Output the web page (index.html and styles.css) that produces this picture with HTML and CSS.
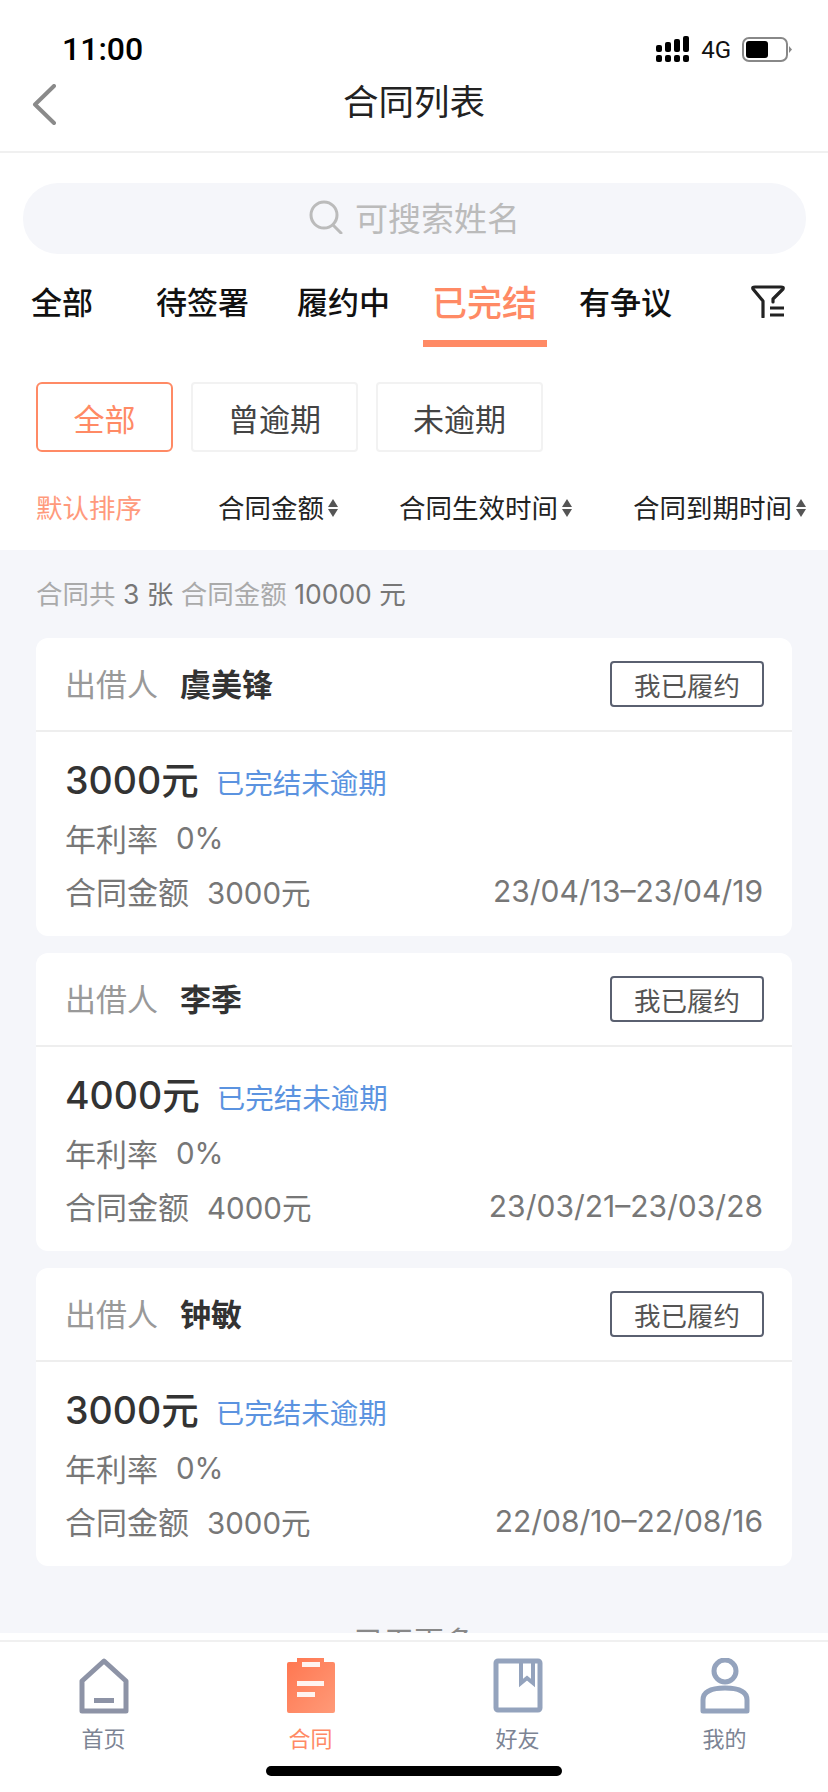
FILE: index.html
```html
<!DOCTYPE html>
<html lang="zh-CN">
<head>
  <meta charset="UTF-8">
  <meta name="viewport" content="width=device-width, initial-scale=1.0">
  <title>合同列表</title>
  <link rel="stylesheet" href="styles.css">
</head>
<body>
  <div class="page">
    <div class="status-bar">
      <span class="time">11:00</span>
      <div class="status-right">
        <svg class="signal" width="34" height="27" viewBox="0 0 34 27">
          <g fill="#000">
            <rect x="0" y="9" width="6" height="7" rx="2"/>
            <rect x="9" y="6" width="6" height="10" rx="2"/>
            <rect x="18" y="3" width="6" height="13" rx="2"/>
            <rect x="27" y="0" width="6" height="16" rx="2"/>
            <rect x="0" y="19" width="6" height="7" rx="2"/>
            <rect x="9" y="19" width="6" height="7" rx="2"/>
            <rect x="18" y="19" width="6" height="7" rx="2"/>
            <rect x="27" y="19" width="6" height="7" rx="2"/>
          </g>
        </svg>
        <span class="net">4G</span>
        <svg width="50" height="26" viewBox="0 0 50 26">
          <rect x="1" y="1" width="44" height="23" rx="6" fill="none" stroke="#888" stroke-width="2"/>
          <rect x="4" y="4" width="22" height="17" rx="3" fill="#000"/>
          <path d="M47 9 L50 12.5 L47 16 Z" fill="#888"/>
        </svg>
      </div>
    </div>

    <div class="nav-bar">
      <svg class="back" width="24" height="41" viewBox="0 0 24 41">
        <path d="M22 2 L3 20.5 L22 39" fill="none" stroke="#8a8a8a" stroke-width="4" stroke-linecap="round" stroke-linejoin="round"/>
      </svg>
      <h1 class="nav-title">合同列表</h1>
    </div>

    <div class="search-box">
      <svg width="34" height="34" viewBox="0 0 34 34">
        <circle cx="15" cy="15" r="13" fill="none" stroke="#bbb" stroke-width="3"/>
        <path d="M24 25 L32 33" stroke="#bbb" stroke-width="3" stroke-linecap="round"/>
      </svg>
      <span>可搜索姓名</span>
    </div>

    <div class="tabs">
      <div class="tab tab-first">全部</div>
      <div class="tab">待签署</div>
      <div class="tab">履约中</div>
      <div class="tab active">已完结</div>
      <div class="tab">有争议</div>
      <svg class="tab-filter" width="34" height="34" viewBox="0 0 34 34">
        <path d="M12 33 V17 L2 5 Q1 3 4 3 H30 Q33 3 32 5 L22 15 V18" fill="none" stroke="#222" stroke-width="3.2" stroke-linecap="round" stroke-linejoin="round"/>
        <path d="M19 24 H33 M19 31 H33" stroke="#222" stroke-width="3.2"/>
      </svg>
    </div>

    <div class="chips">
      <div class="chip chip-on">全部</div>
      <div class="chip">曾逾期</div>
      <div class="chip">未逾期</div>
    </div>

    <div class="sorts">
      <span class="sort sort-on">默认排序</span>
      <span class="sort">合同金额<i class="arrows"></i></span>
      <span class="sort">合同生效时间<i class="arrows"></i></span>
      <span class="sort">合同到期时间<i class="arrows"></i></span>
    </div>

    <div class="main">
      <div class="list">
        <p class="summary">合同共 <em>3 张</em> 合同金额 <em>10000 元</em></p>

        <div class="card">
          <div class="card-head">
            <span class="label">出借人</span>
            <span class="name">虞美锋</span>
            <span class="done-btn">我已履约</span>
          </div>
          <div class="card-body">
            <div class="row-amount"><strong>3000元</strong><span class="state">已完结未逾期</span></div>
            <div class="row">年利率<span class="val">0%</span></div>
            <div class="row">合同金额<span class="val">3000元</span><span class="dates">23/04/13–23/04/19</span></div>
          </div>
        </div>

        <div class="card">
          <div class="card-head">
            <span class="label">出借人</span>
            <span class="name">李季</span>
            <span class="done-btn">我已履约</span>
          </div>
          <div class="card-body">
            <div class="row-amount"><strong>4000元</strong><span class="state">已完结未逾期</span></div>
            <div class="row">年利率<span class="val">0%</span></div>
            <div class="row">合同金额<span class="val">4000元</span><span class="dates">23/03/21–23/03/28</span></div>
          </div>
        </div>

        <div class="card">
          <div class="card-head">
            <span class="label">出借人</span>
            <span class="name">钟敏</span>
            <span class="done-btn">我已履约</span>
          </div>
          <div class="card-body">
            <div class="row-amount"><strong>3000元</strong><span class="state">已完结未逾期</span></div>
            <div class="row">年利率<span class="val">0%</span></div>
            <div class="row">合同金额<span class="val">3000元</span><span class="dates">22/08/10–22/08/16</span></div>
          </div>
        </div>

        <p class="no-more">已无更多</p>
      </div>
    </div>

    <div class="tab-bar">
      <div class="bar-item">
        <svg width="50" height="56" viewBox="0 0 50 56">
          <path d="M25 3 L47 23 V53 H3 V23 Z" fill="none" stroke="#8d93a6" stroke-width="5" stroke-linejoin="round"/>
          <rect x="15" y="40" width="20" height="5" fill="#8d93a6"/>
        </svg>
        <span>首页</span>
      </div>
      <div class="bar-item bar-on">
        <svg width="50" height="56" viewBox="0 0 50 56">
          <defs>
            <linearGradient id="clip" x1="0" y1="0" x2="1" y2="1">
              <stop offset="0" stop-color="#ff7650"/>
              <stop offset="1" stop-color="#ff9a78"/>
            </linearGradient>
          </defs>
          <path d="M11 0 H38 V4 H47 Q49 4 49 6 V53 Q49 55 47 55 H3 Q1 55 1 53 V6 Q1 4 3 4 H11 Z" fill="url(#clip)"/>
          <rect x="16" y="4" width="18" height="5" fill="#fff" opacity="0.9"/>
          <rect x="11" y="23" width="27" height="5" fill="#fff" opacity="0.9"/>
          <rect x="11" y="34" width="18" height="5" fill="#fff" opacity="0.9"/>
        </svg>
        <span>合同</span>
      </div>
      <div class="bar-item">
        <svg width="50" height="56" viewBox="0 0 50 56">
          <rect x="3" y="3" width="44" height="49" rx="2" fill="none" stroke="#94a3bd" stroke-width="5"/>
          <path d="M28 3 V25 L34 20 L40 25 V3" fill="none" stroke="#94a3bd" stroke-width="4"/>
        </svg>
        <span>好友</span>
      </div>
      <div class="bar-item">
        <svg width="50" height="56" viewBox="0 0 50 56">
          <circle cx="25" cy="13" r="11" fill="none" stroke="#94a3bd" stroke-width="5"/>
          <path d="M3 53 V42 C3 33 12 30 25 30 C38 30 47 33 47 42 V53 Z" fill="none" stroke="#94a3bd" stroke-width="5" stroke-linejoin="round"/>
        </svg>
        <span>我的</span>
      </div>
      <div class="home-bar"></div>
    </div>
  </div>
</body>
</html>
```

FILE: styles.css
```css
/* General Styles */
body {
  margin: 0;
  font-family: Inter, "Noto Sans CJK SC", sans-serif;
  background: #fff;
  color: #333;
}

.page {
  width: 828px;
  height: 1792px;
  display: flex;
  flex-direction: column;
  overflow: hidden;
}

/* Status bar */
.status-bar {
  height: 70px;
  flex: none;
  box-sizing: border-box;
  padding: 29px 36px 0 62px;
  display: flex;
  justify-content: space-between;
  align-items: flex-start;
}

.time {
  font-family: Roboto, sans-serif;
  font-size: 32px;
  font-weight: 500;
  line-height: 40px;
  color: #000;
}

.status-right {
  display: flex;
  align-items: center;
  gap: 11px;
  margin-top: 7px;
}

.net {
  font-family: Roboto, sans-serif;
  font-size: 24px;
  line-height: 26px;
  color: #111;
}

/* Nav */
.nav-bar {
  height: 81px;
  flex: none;
  position: relative;
  display: flex;
  justify-content: center;
  border-bottom: 2px solid #f0f0f0;
}

.nav-title {
  margin: 10px 0 0;
  font-size: 35.5px;
  font-weight: 400;
  line-height: 46px;
  color: #222;
}

.back {
  position: absolute;
  left: 32px;
  top: 14px;
}

/* Search */
.search-box {
  height: 71px;
  flex: none;
  box-sizing: border-box;
  margin: 30px 22px 0 23px;
  padding-bottom: 3px;
  border-radius: 35px;
  background: #f5f6fa;
  display: flex;
  align-items: center;
  justify-content: center;
  gap: 12px;
  font-size: 33px;
  color: #bbb;
}

/* Tabs */
.tabs {
  height: 93px;
  flex: none;
  box-sizing: border-box;
  display: flex;
  align-items: flex-start;
  padding-top: 28px;
}

.tab {
  width: 141px;
  text-align: center;
  font-size: 31px;
  font-weight: 500;
  line-height: 42px;
  color: #111;
  position: relative;
  height: 65px;
}

.tab-first {
  width: 132px;
  box-sizing: border-box;
  padding-left: 31px;
  text-align: left;
}

.tab.active {
  font-size: 35px;
  color: #ff8a65;
}

.tab.active::after {
  content: "";
  position: absolute;
  left: 9px;
  right: 8px;
  bottom: 0;
  height: 7px;
  background: #ff8a65;
}

.tab-filter {
  margin: 2px 0 0 55px;
}

/* Filter chips */
.chips {
  flex: none;
  display: flex;
  gap: 18px;
  margin: 35px 0 0 36px;
}

.chip {
  width: 167px;
  height: 70px;
  box-sizing: border-box;
  border: 2px solid #f2f2f2;
  border-radius: 4px;
  display: flex;
  align-items: center;
  justify-content: center;
  font-size: 31px;
  color: #444;
}

.chip-on {
  width: 137px;
  border-color: #ff8a65;
  border-radius: 6px;
  color: #ff8a65;
}

/* Sort row */
.sorts {
  height: 98px;
  flex: none;
  box-sizing: border-box;
  padding: 10px 0 0 36px;
  display: flex;
  align-items: center;
  gap: 61px;
}

.sort {
  display: flex;
  align-items: center;
  gap: 4px;
  font-size: 26.5px;
  color: #222;
}

.sort-on {
  margin-right: 15px;
  color: #ff9a7c;
}

.arrows {
  width: 10px;
  height: 18px;
  display: flex;
  flex-direction: column;
  justify-content: space-between;
  margin-top: 4px;
}

.arrows::before,
.arrows::after {
  content: "";
  border-left: 5px solid transparent;
  border-right: 5px solid transparent;
}

.arrows::before {
  border-bottom: 8px solid #555;
}

.arrows::after {
  border-top: 8px solid #555;
}

/* List */
.main {
  height: 1083px;
  margin-bottom: 7px;
  flex: none;
  overflow: hidden;
}

.list {
  height: 1083px;
  box-sizing: border-box;
  padding: 29px 36px 0;
  background: #f5f6fa;
}

.summary {
  margin: 0 0 29px;
  font-size: 26.5px;
  line-height: 30px;
  color: #aaa;
}

.summary em {
  font-style: normal;
  color: #777;
}

.card {
  height: 298px;
  margin-bottom: 17px;
  background: #fff;
  border-radius: 12px;
}

.card-head {
  height: 94px;
  box-sizing: border-box;
  padding: 0 28px 0 29px;
  display: flex;
  align-items: center;
  border-bottom: 2px solid #eee;
  font-size: 31px;
}

.label {
  margin-bottom: 4px;
  color: #999;
}

.name {
  margin: 0 0 4px 22px;
  font-weight: 700;
  color: #333;
}

.done-btn {
  width: 154px;
  height: 46px;
  box-sizing: border-box;
  margin-left: auto;
  border: 2px solid #5a6070;
  border-radius: 4px;
  display: flex;
  align-items: center;
  justify-content: center;
  font-size: 26.5px;
  color: #555;
}

.card-body {
  padding: 17px 29px 0;
}

.row-amount {
  display: flex;
  align-items: center;
  height: 56px;
  margin-bottom: 6px;
}

.row-amount strong {
  font-size: 37.5px;
  font-weight: 500;
  color: #333;
}

.state {
  margin: 8px 0 0 17px;
  font-size: 28.5px;
  color: #5b93e0;
}

.row {
  display: flex;
  align-items: center;
  height: 53px;
  font-size: 31px;
  color: #777;
}

.val {
  margin-left: 18px;
  font-size: 29.5px;
  color: #777;
}

.dates {
  margin-left: auto;
  font-size: 30px;
  color: #777;
}

.no-more {
  margin: 56px 0 0;
  text-align: center;
  font-size: 30px;
  line-height: 40px;
  color: #888;
}

/* Bottom tab bar */
.tab-bar {
  height: 152px;
  flex: none;
  box-sizing: border-box;
  position: relative;
  padding-top: 16px;
  display: flex;
  border-top: 2px solid #f0f0f0;
  background: #fff;
}

.bar-item {
  width: 207px;
  display: flex;
  flex-direction: column;
  align-items: center;
  gap: 8px;
  font-size: 22px;
  line-height: 34px;
  color: #7c8494;
}

.bar-on {
  color: #ff8a65;
}

.home-bar {
  position: absolute;
  left: 266px;
  bottom: 16px;
  width: 296px;
  height: 10px;
  border-radius: 5px;
  background: #000;
}
```
